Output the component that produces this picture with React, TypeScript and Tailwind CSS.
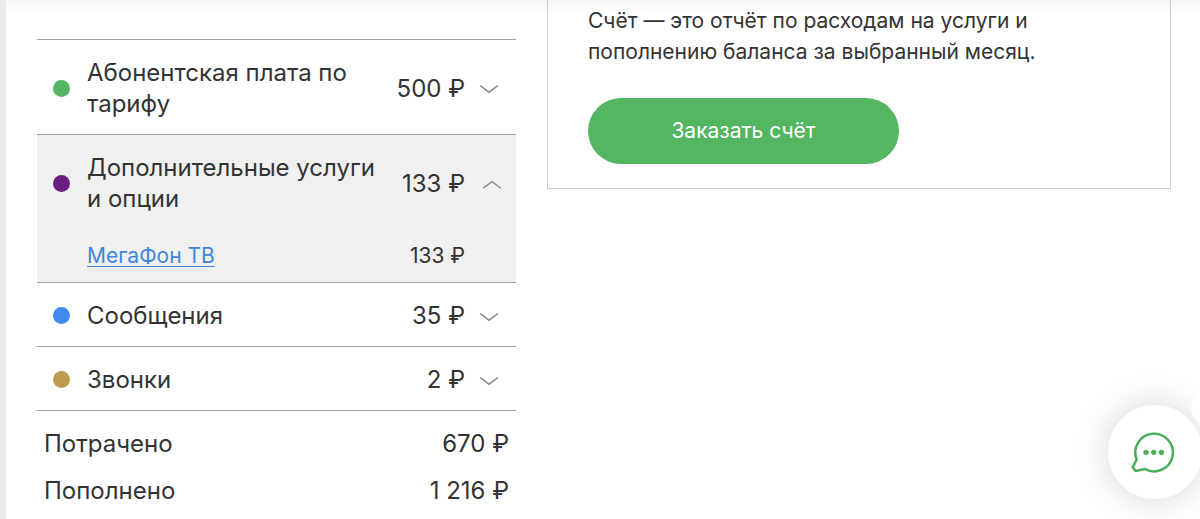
import { useState } from "react";
import clsx from "clsx";

type Detail = { name: string; amount: string };
type Expense = { name: string; amount: string; dot: string; details: Detail[] };

const expenses: Expense[] = [
  { name: "Абонентская плата по тарифу", amount: "500 ₽", dot: "bg-[#54b661]", details: [] },
  {
    name: "Дополнительные услуги и опции",
    amount: "133 ₽",
    dot: "bg-[#6b1f80]",
    details: [{ name: "МегаФон ТВ", amount: "133 ₽" }],
  },
  { name: "Сообщения", amount: "35 ₽", dot: "bg-[#3f8af2]", details: [] },
  { name: "Звонки", amount: "2 ₽", dot: "bg-[#bd9c50]", details: [] },
];

const totals = [
  { label: "Потрачено", value: "670 ₽" },
  { label: "Пополнено", value: "1 216 ₽" },
];

function Chevron({ open }: { open: boolean }) {
  return (
    <svg
      viewBox="0 0 24 12"
      className="h-3 w-6 shrink-0"
      fill="none"
      stroke="#8c8c8c"
      strokeWidth="1.5"
      aria-hidden="true"
    >
      <path d={open ? "M6.2 11.2 15 4.700l8.800 6.500" : "M3.200 3.700 12 10.200l8.800-6.500"} />
    </svg>
  );
}

function ExpenseRow({ expense, open, onToggle }: { expense: Expense; open: boolean; onToggle: () => void }) {
  return (
    <li className={clsx("border-b border-[#a0a0a0]", open && "bg-[#f0f0f0]")}>
      <button
        type="button"
        aria-expanded={open}
        onClick={onToggle}
        className="flex w-full items-center pt-[17px] pr-[15px] pb-[15px] pl-4 text-left text-2xl leading-[31px]"
      >
        <span className={clsx("mr-[17px] size-[17px] shrink-0 rounded-full", expense.dot)} />
        <span className="flex-1">{expense.name}</span>
        <span className="mr-3 ml-5 whitespace-nowrap">{expense.amount}</span>
        <Chevron open={open} />
      </button>
      {open &&
        expense.details.map((detail) => (
          <div
            key={detail.name}
            className="flex justify-between pt-[11px] pr-[51px] pb-[10px] pl-[50px] text-[21px] leading-8"
          >
            <a href="#tv" className="text-[#3f87dd] underline decoration-1 underline-offset-3">
              {detail.name}
            </a>
            <span>{detail.amount}</span>
          </div>
        ))}
    </li>
  );
}

export default function App() {
  const [openRow, setOpenRow] = useState(1);

  return (
    <div className="min-h-screen border-l-6 border-[#ececec] bg-white font-['Inter',sans-serif] font-normal text-[#333333]">
      <main className="grid grid-cols-[479fr_624fr] items-start gap-[31px] bg-linear-to-b from-[#f7f7f7] from-[2px] to-white to-[12px] pr-[29px] pl-[31px]">
        <section className="pt-[39px]" aria-label="Расходы">
          <ul className="border-t border-[#a0a0a0]">
            {expenses.map((expense, i) => (
              <ExpenseRow
                key={expense.name}
                expense={expense}
                open={openRow === i}
                onToggle={() => setOpenRow(openRow === i ? -1 : i)}
              />
            ))}
          </ul>
          <dl className="flex flex-col gap-4 px-[7px] pt-[17px] text-2xl leading-[31px]">
            {totals.map((total) => (
              <div key={total.label} className="flex justify-between">
                <dt>{total.label}</dt>
                <dd>{total.value}</dd>
              </div>
            ))}
          </dl>
        </section>

        <section className="border border-t-0 border-[#cccccc] px-10 pt-[5px] pb-6">
          <p className="max-w-[480px] text-[21px] leading-[31px]">
            Счёт — это отчёт по расходам на услуги и пополнению баланса за выбранный месяц.
          </p>
          <button
            type="button"
            className="mt-[31px] h-[66px] w-[311px] rounded-full bg-[#54b661] text-[21px] text-white"
          >
            Заказать счёт
          </button>
        </section>
      </main>

      <button
        type="button"
        aria-label="Чат"
        className="fixed right-[-2px] bottom-5 flex size-[94px] items-center justify-center rounded-full bg-white shadow-[0_0_36px_rgba(0,0,0,0.16)]"
      >
        <svg
          viewBox="0 0 44 44"
          className="size-11 overflow-visible"
          fill="none"
          stroke="#4aad59"
          strokeWidth="2.500"
          aria-hidden="true"
        >
          <path
            strokeLinejoin="round"
            d="M3.700 29.700A18.800 18.800 0 1 1 12 39L2.600 41L-0.400 37.300Z"
          />
          <g fill="#4aad59" stroke="none">
            <circle cx="13" cy="22.300" r="2.600" />
            <circle cx="20.700" cy="22.300" r="2.600" />
            <circle cx="28.400" cy="22.300" r="2.600" />
          </g>
        </svg>
      </button>
      <button
        type="button"
        aria-label="Закрыть"
        className="fixed right-[-25px] bottom-[94px] size-[34px] rounded-full bg-white"
      />
    </div>
  );
}
